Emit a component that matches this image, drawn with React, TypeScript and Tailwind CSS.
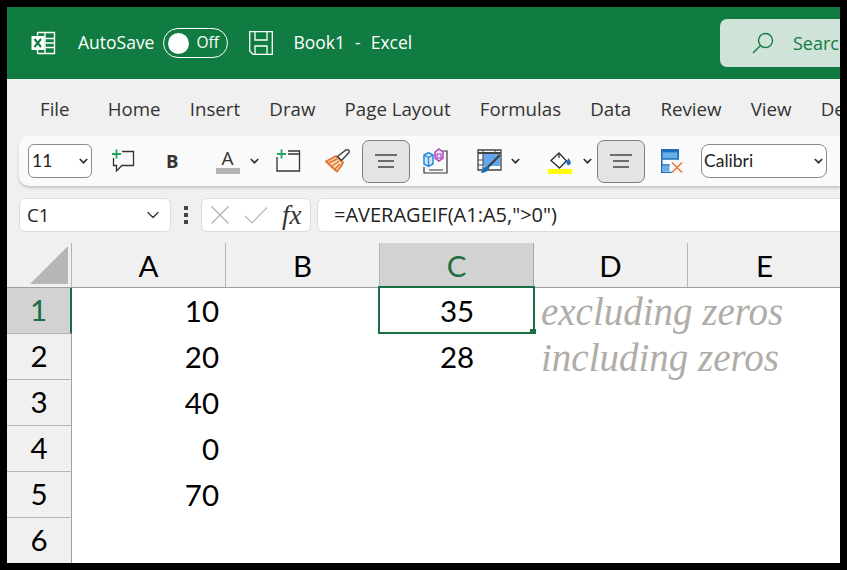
import React from 'react';
import { ChevronDown } from 'lucide-react';

const tabs = ['Home', 'Insert', 'Draw', 'Page Layout', 'Formulas', 'Data', 'Review', 'View', 'Developer'];
const columns = ['A', 'B', 'C', 'D', 'E'];
const rows = [
  { id: 1, a: '10', c: '35', note: 'excluding zeros' },
  { id: 2, a: '20', c: '28', note: 'including zeros' },
  { id: 3, a: '40' },
  { id: 4, a: '0' },
  { id: 5, a: '70' },
  { id: 6 },
];

const ExcelIcon = () => (
  <svg width="25" height="24" viewBox="0 0 25 24" className="shrink-0">
    <path d="M6.500 1.500h17v21h-17M6.500 1.500v3M6.500 19v3.500M14 1.500v21M14 7.500h9.500M14 12h9.500M14 16.500h9.500" fill="none" stroke="#fff" strokeWidth="1.400" />
    <rect x="0.500" y="5" width="13" height="14" fill="#fff" />
    <path d="M3.500 8l6.500 8M10 8l-6.500 8" stroke="#107c41" strokeWidth="2" />
  </svg>
);

const SaveIcon = () => (
  <svg width="24" height="24" viewBox="0 0 24 24" className="shrink-0">
    <path d="M.7.700h22.600v22.600H4L.7 20zM6 .7v8.300h12V.7M6 23.300V15h12v8.300" fill="none" stroke="#fff" strokeWidth="1.300" />
  </svg>
);

const CommentIcon = () => (
  <svg width="25" height="26" viewBox="0 0 25 26">
    <path d="M11 3.500h11.500v14H11l-5.500 5.500v-5.500h-3V10" fill="none" stroke="#333" strokeWidth="1.300" />
    <path d="M5.500 1.500v9M1 6h9" stroke="#21a366" strokeWidth="1.800" />
  </svg>
);

const SheetIcon = () => (
  <svg width="25" height="24" viewBox="0 0 25 24">
    <path d="M1 8v14h22.500V2H12M12 5h11.500" fill="none" stroke="#333" strokeWidth="1.300" />
    <path d="M5.500 .5v9M1 5h9" stroke="#21a366" strokeWidth="1.800" />
  </svg>
);

const BrushIcon = () => (
  <svg width="26" height="26" viewBox="0 0 26 26">
    <path d="M11 8L1 13.500c3 3 7 6.500 11 10 2.500-3 5-6 6-9z" fill="#fbd9bd" stroke="#e3742b" strokeWidth="1.800" />
    <path d="M4 15l8-4M7 18l7-5M10 21l5-5" stroke="#e3742b" strokeWidth="1.500" />
    <path d="M12.500 8.500l4 4 7.500-8c1-2-1-3.500-3-2.500z" fill="#fff" stroke="#444" strokeWidth="1.500" />
  </svg>
);

const Shapes3DIcon = () => (
  <svg width="25" height="26" viewBox="0 0 25 26">
    <path d="M19 3h5v22H1v-6M6 22h14" fill="none" stroke="#333" strokeWidth="1.200" />
    <path d="M1 7l4.500-2.500L10 7v9l-4.500 2.500L1 16z" fill="#cfe6f8" stroke="#2b88d8" strokeWidth="1.500" />
    <path d="M5.500 9.500V18M1 7l4.500 2.500L10 7" fill="none" stroke="#2b88d8" strokeWidth="1.300" />
    <path d="M12 4l4-3 4 3v6l-4 3-4-3z" fill="#f4e3f7" stroke="#b146c2" strokeWidth="1.500" />
    <path d="M14 6h4v4h-4z" fill="none" stroke="#b146c2" strokeWidth="1.200" />
  </svg>
);

const TableStyleIcon = () => (
  <svg width="26" height="26" viewBox="0 0 26 26">
    <path d="M1 2h23v20H1z" fill="#fff" stroke="#444" strokeWidth="1.300" />
    <path d="M1 5h23" stroke="#444" strokeWidth="2" />
    <path d="M6 6h17v12H6z" fill="#62a8ea" />
    <path d="M6 2v20M1 12h5M1 17h5M18 2v4" stroke="#444" strokeWidth="1" />
    <path d="M23 7L11 19" stroke="#444" strokeWidth="2.400" />
    <path d="M4 25c1-4 3-7 6-7 2 0 3 1.500 2 3-1.500 2.500-5 4-8 4z" fill="#1e6fbb" />
  </svg>
);

const FillIcon = () => (
  <svg width="24" height="22" viewBox="0 0 24 22">
    <path d="M3 8.500L11 1l7.500 8-7 7z" fill="#fff" stroke="#333" strokeWidth="1.400" />
    <path d="M11 1V6" stroke="#333" strokeWidth="1.300" />
    <path d="M20.500 6c1.500 2 2.300 3.500 2.300 5a2 2 0 0 1-4.300 0c0-1.500 1-3 2-5z" fill="#1e6fbb" />
    <rect x="0" y="17" width="24" height="5" fill="#ffff00" />
  </svg>
);

const DeleteIcon = () => (
  <svg width="22" height="24" viewBox="0 0 22 24">
    <path d="M.8.800h16.400v9.200H.8z" fill="#6aaee8" stroke="#1e6fbb" strokeWidth="1.600" />
    <path d="M.8.800h16.400v2.600H.8z" fill="#1e6fbb" />
    <path d="M.8 10.500v13h10M.8 16h8" fill="none" stroke="#1e6fbb" strokeWidth="1.600" />
    <path d="M1.500 17h7v5.500h-7z" fill="#6aaee8" />
    <path d="M11 13.500l10 10M21 13.500l-10 10" stroke="#e5793a" strokeWidth="1.500" />
  </svg>
);

const AlignIcon = () => (
  <svg width="22" height="14" viewBox="0 0 22 14">
    <path d="M0 1h22M3 7h16M3 13h16" stroke="#444" strokeWidth="1.300" />
  </svg>
);

const SmallChevron = ({ className }: { className: string }) => (
  <svg width="9" height="6" viewBox="0 0 9 6" className={`shrink-0 ${className}`}>
    <path d="M.8 1l3.700 3.700L8.200 1" fill="none" stroke="#333" strokeWidth="1.700" />
  </svg>
);

const ToggledButton = ({ className }: { className: string }) => (
  <div className={`w-[48px] h-[43px] shrink-0 rounded-[7px] border border-[#7f7f7f] bg-[#e4e4e4] flex items-center justify-center ${className}`}>
    <AlignIcon />
  </div>
);

export default function App() {
  return (
    <div className="w-[847px] h-[570px] bg-black pt-[7px] pl-[7px] pr-[7px] pb-[7px] overflow-hidden">
      <div className="w-[833px] h-[556px] bg-[#f0f0f0] overflow-hidden flex flex-col font-['Open_Sans',sans-serif]">
        {/* Title bar */}
        <div className="h-[72px] shrink-0 bg-[#107c41] flex items-center pl-[24px] text-white relative">
          <ExcelIcon />
          <span className="ml-[22px] text-[17.500px] leading-none">AutoSave</span>
          <div className="ml-[9px] w-[65px] h-[30px] rounded-full border border-white flex items-center pl-[4px] shrink-0">
            <div className="w-[21px] h-[21px] rounded-full bg-white" />
            <span className="ml-[7px] text-[15.500px] leading-none">Off</span>
          </div>
          <div className="ml-[21px]"><SaveIcon /></div>
          <span className="ml-[20px] text-[17.500px] leading-none">Book1</span>
          <span className="ml-[10px] text-[17.500px] leading-none">-</span>
          <span className="ml-[10px] text-[17.500px] leading-none">Excel</span>
          <div className="absolute left-[713px] top-[12px] w-[140px] h-[48px] rounded-[7px] bg-[#cfe3d8] flex items-center pl-[32px] text-[#107c41]">
            <svg width="22" height="22" viewBox="0 0 22 22" className="shrink-0">
              <circle cx="13.500" cy="8.500" r="7" fill="none" stroke="#107c41" strokeWidth="1.400" />
              <path d="M8.500 13.500L1 21" stroke="#107c41" strokeWidth="1.400" />
            </svg>
            <span className="ml-[19px] text-[18px] leading-none">Search</span>
          </div>
        </div>

        {/* Ribbon tabs */}
        <div className="h-[57px] shrink-0 flex items-center pt-[3px] pl-[33px] gap-[29.200px] text-[18.700px] text-[#333] whitespace-nowrap overflow-hidden">
          <span className="mr-[9px]">File</span>
          {tabs.map((t) => (
            <span key={t}>{t}</span>
          ))}
        </div>

        {/* Ribbon toolbar */}
        <div className="h-[50px] shrink-0 ml-[12px] rounded-l-[10px] bg-[#fafafa] shadow-[0_2px_3px_rgba(0,0,0,0.18)] flex items-center pl-[9px]">
          <div className="w-[64px] h-[34px] shrink-0 rounded-[6px] border border-[#8a8a8a] bg-white flex items-center justify-between pl-[3px] pr-[3px] font-['Lato',sans-serif] text-[17.500px] text-[#222]">
            <span>11</span>
            <SmallChevron className="" />
          </div>
          <div className="ml-[19px] w-[25px] shrink-0"><CommentIcon /></div>
          <span className="ml-[30px] w-[13px] shrink-0 text-[18.500px] font-bold text-[#333]">B</span>
          <div className="ml-[36px] w-[25px] shrink-0 flex flex-col items-center">
            <span className="text-[19px] leading-[20px] text-[#333]">A</span>
            <div className="w-[24px] h-[6px] bg-[#b3b3b3]" />
          </div>
          <SmallChevron className="ml-[10px]" />
          <div className="ml-[17px]"><SheetIcon /></div>
          <div className="ml-[24px]"><BrushIcon /></div>
          <ToggledButton className="ml-[11px]" />
          <div className="ml-[13px]"><Shapes3DIcon /></div>
          <div className="ml-[29px]"><TableStyleIcon /></div>
          <SmallChevron className="ml-[8px]" />
          <div className="ml-[28px] mt-[4px]"><FillIcon /></div>
          <SmallChevron className="ml-[11px]" />
          <ToggledButton className="ml-[5px]" />
          <div className="ml-[16px]"><DeleteIcon /></div>
          <div className="ml-[18px] w-[126px] h-[34px] shrink-0 rounded-[8px] border border-[#8a8a8a] bg-white flex items-center justify-between pl-[2px] pr-[3px] font-['Lato',sans-serif] text-[17.500px] text-[#222]">
            <span>Calibri</span>
            <SmallChevron className="" />
          </div>
        </div>

        {/* Formula bar */}
        <div className="h-[34px] shrink-0 mt-[12px] ml-[12px] flex items-stretch">
          <div className="w-[152px] shrink-0 rounded-[6px] border border-[#dcdcdc] bg-white flex items-center justify-between pl-[7px] pr-[7px] text-[18.500px] text-[#222]">
            <span>C1</span>
            <ChevronDown size={20} strokeWidth={1.600} className="text-[#333]" />
          </div>
          <div className="w-[30px] shrink-0 flex flex-col items-center justify-center gap-[3px]">
            <div className="w-[4px] h-[4px] bg-[#444]" />
            <div className="w-[4px] h-[4px] bg-[#444]" />
            <div className="w-[4px] h-[4px] bg-[#444]" />
          </div>
          <div className="w-[110px] shrink-0 rounded-[6px] border border-[#dcdcdc] bg-white flex items-center pl-[9px]">
            <svg width="18" height="18" viewBox="0 0 18 18" className="shrink-0">
              <path d="M.5.500l17 17M17.500.500l-17 17" stroke="#b0b0b0" strokeWidth="1.200" />
            </svg>
            <svg width="24" height="17" viewBox="0 0 24 17" className="ml-[15px] shrink-0">
              <path d="M1 9l7 7L23 .500" fill="none" stroke="#b8b8b8" strokeWidth="1.200" />
            </svg>
            <span className="ml-[14px] font-['Liberation_Serif',serif] italic text-[27px] leading-none text-[#333]">fx</span>
          </div>
          <div className="ml-[6px] flex-1 rounded-l-[6px] border border-r-0 border-[#dcdcdc] bg-white flex items-center pl-[16px] text-[20px] text-[#222]">
            =AVERAGEIF(A1:A5,"&gt;0")
          </div>
        </div>

        {/* Sheet */}
        <div className="mt-[11px] flex-1 flex flex-col font-['Lato',sans-serif] text-[29.500px] text-black min-h-0">
          <div className="h-[45px] shrink-0 flex border-b border-[#a0a0a0]">
            <div className="w-[65px] shrink-0 border-r border-[#b4b4b4] relative">
              <svg width="38" height="38" viewBox="0 0 38 38" className="absolute right-[3px] bottom-[3px]">
                <path d="M38 0v38H0z" fill="#b6b6b6" />
              </svg>
            </div>
            {columns.map((c) => (
              <div
                key={c}
                className={c === 'C'
                  ? 'w-[154px] shrink-0 bg-[#d2d2d2] text-[#1b6e42] border-r border-[#a8a8a8] flex items-center justify-center pt-[3px]'
                  : 'w-[154px] shrink-0 border-r border-[#b4b4b4] flex items-center justify-center pt-[3px]'}
              >
                {c}
              </div>
            ))}
          </div>
          {rows.map((r) => (
            <div key={r.id} className="h-[46px] shrink-0 flex">
              <div className={r.id === 1
                ? 'w-[65px] shrink-0 bg-[#d2d2d2] text-[#1b6e42] border-r-2 border-r-[#1b6e42] border-b border-b-[#b4b4b4] flex items-center justify-center'
                : 'w-[65px] shrink-0 border-r border-r-[#a0a0a0] border-b border-b-[#b4b4b4] flex items-center justify-center'}>
                {r.id}
              </div>
              <div className="flex-1 bg-white flex items-center relative">
                <span className="w-[147px] text-right shrink-0">{r.a}</span>
                <span className="ml-[161px] w-[154px] text-center shrink-0">{r.c}</span>
                {r.note && (
                  <span className="ml-[7px] font-['Liberation_Serif',serif] italic text-[39px] leading-none text-[#b0aca8] whitespace-nowrap">{r.note}</span>
                )}
                {r.id === 1 && (
                  <div className="absolute left-[306px] -top-[2px] w-[157px] h-[48px] border-2 border-[#1b6e42]">
                    <div className="absolute -right-[3px] -bottom-[3px] w-[6px] h-[6px] bg-[#1b6e42]" />
                  </div>
                )}
              </div>
            </div>
          ))}
        </div>
      </div>
    </div>
  );
}
